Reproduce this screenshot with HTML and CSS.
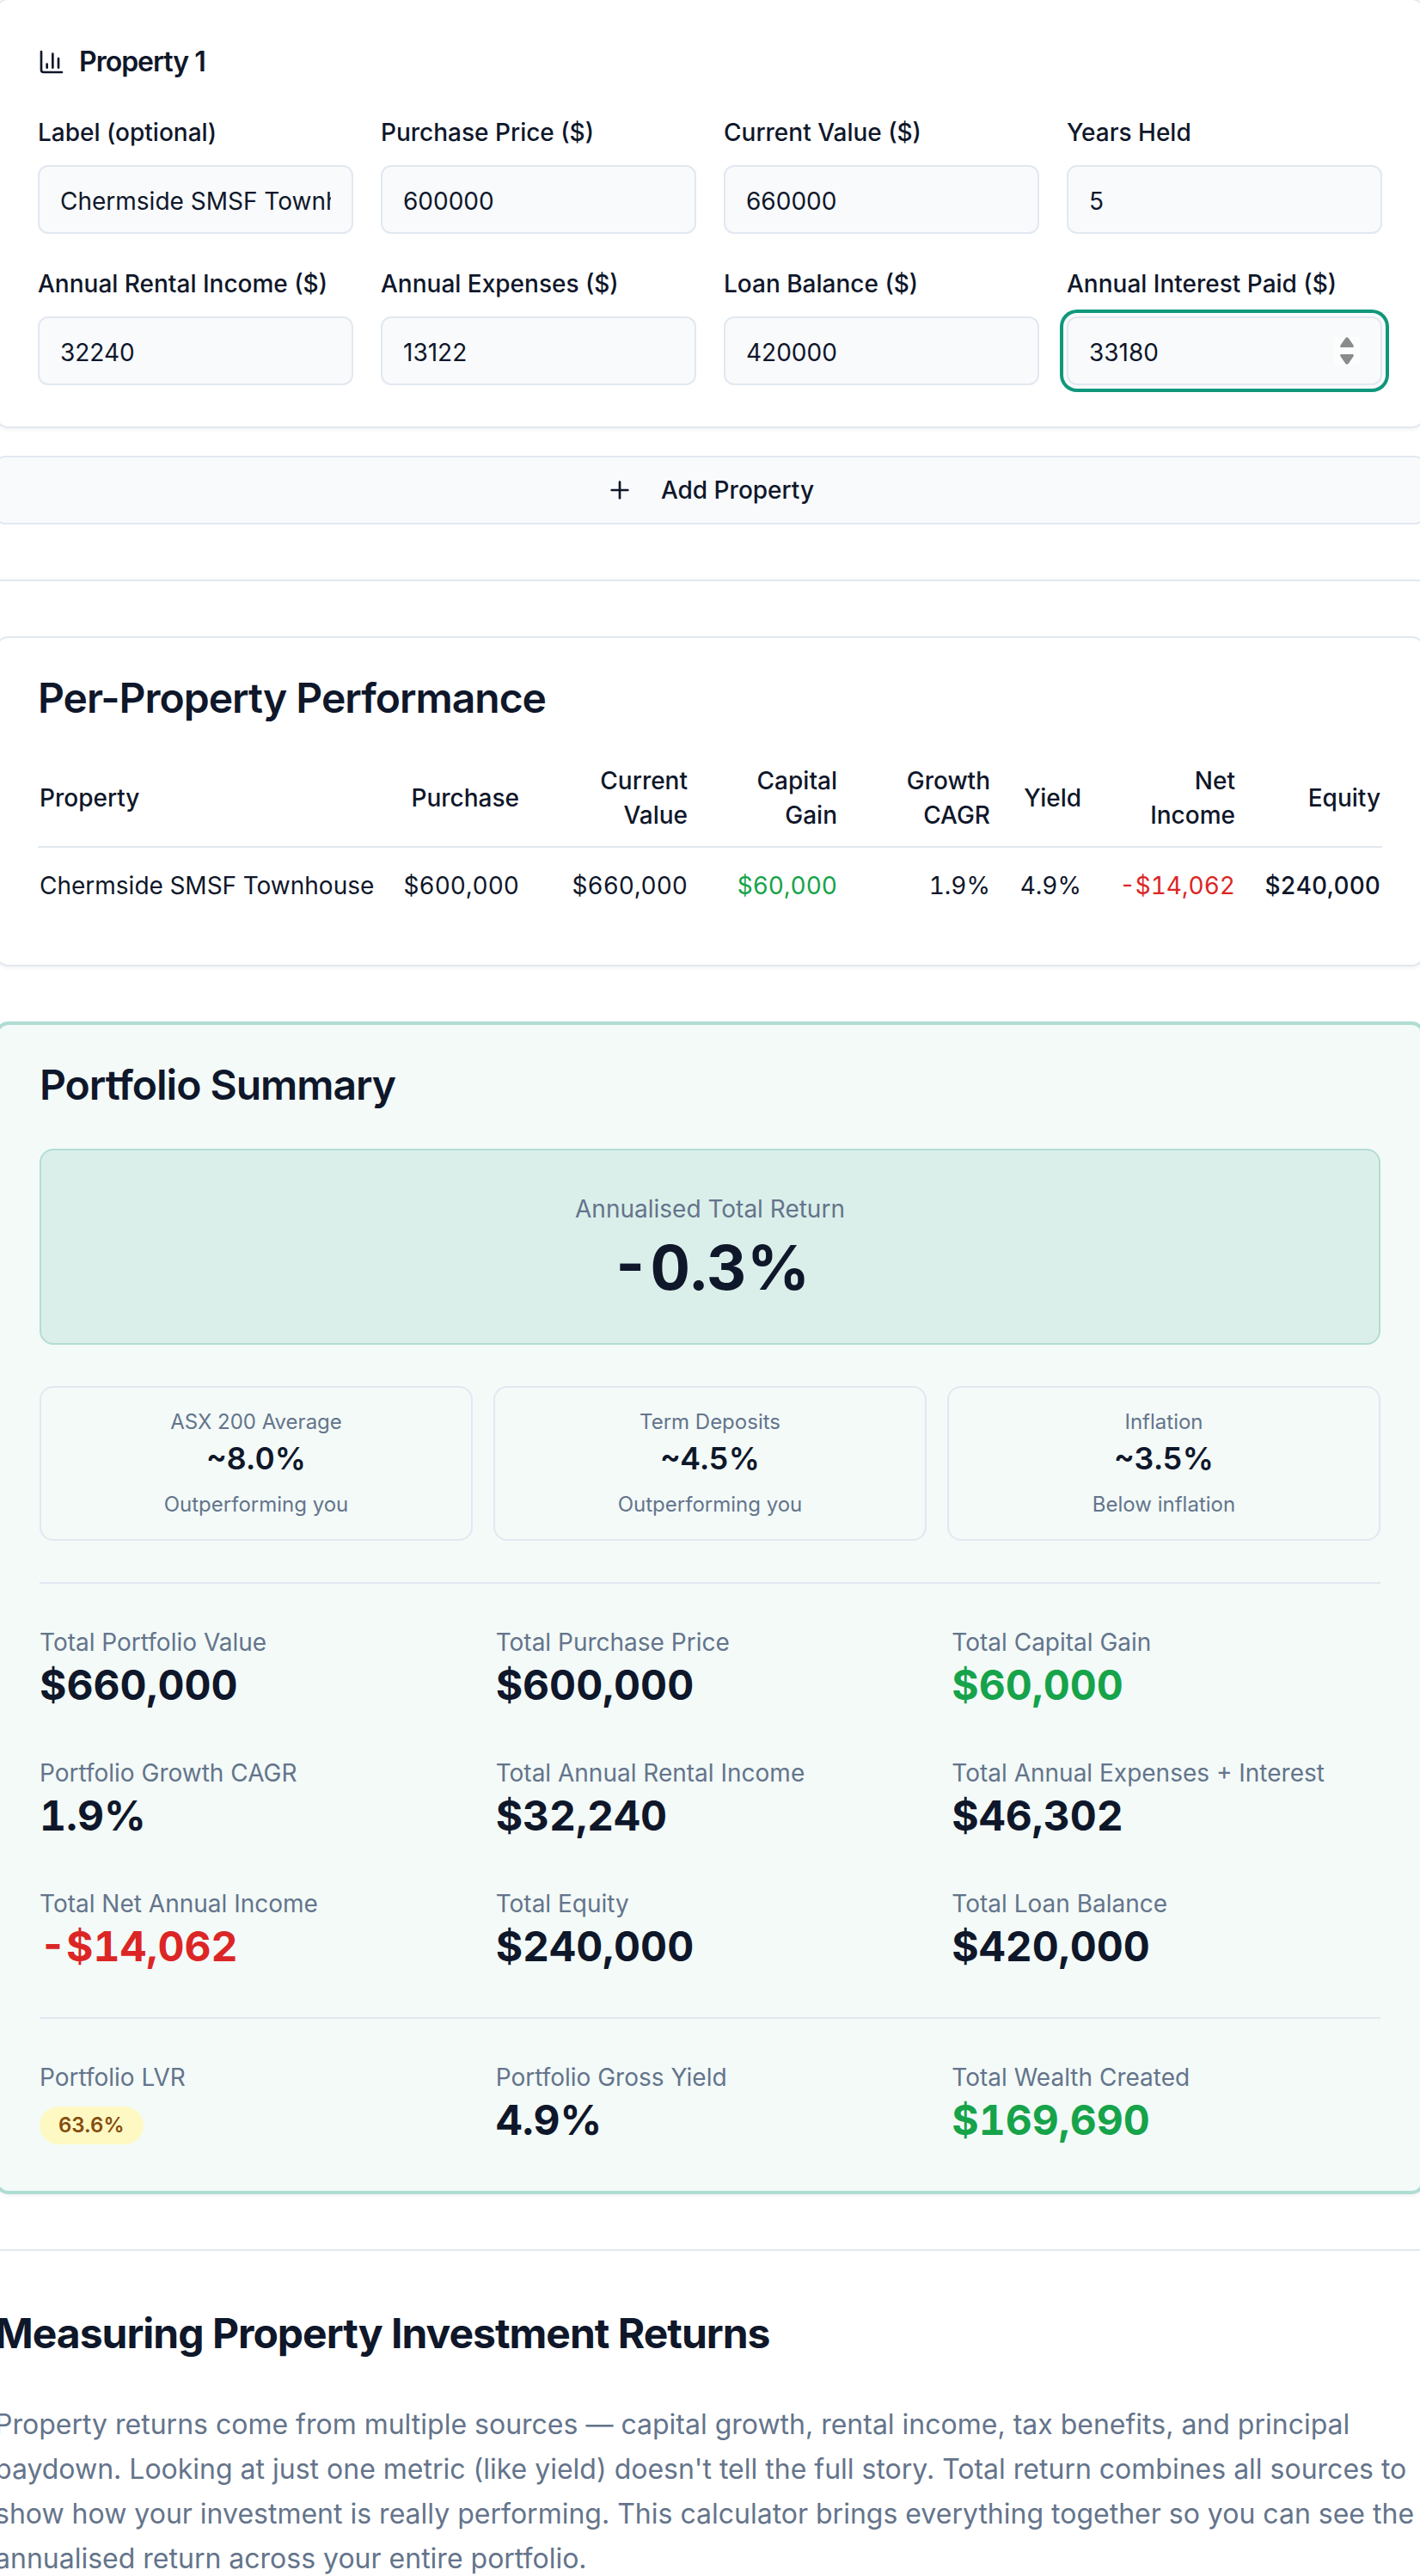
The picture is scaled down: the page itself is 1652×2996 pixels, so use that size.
FILE: index.html
```html
<!DOCTYPE html>
<html lang="en">
<head>
    <meta charset="UTF-8">
    <meta name="viewport" content="width=device-width, initial-scale=1.0">
    <title>Property Portfolio Calculator</title>
    <link rel="stylesheet" href="styles.css">
</head>
<body>
    <main class="calculator">
        <!-- Property inputs -->
        <section class="card property-card">
            <h3 class="property-title">
                <svg class="icon" viewBox="0 0 24 24" aria-hidden="true">
                    <path d="M3 3v16a2 2 0 0 0 2 2h16"/>
                    <path d="M18 17V9"/>
                    <path d="M13 17V5"/>
                    <path d="M8 17v-3"/>
                </svg>
                Property 1
            </h3>
            <div class="field-grid">
                <div class="field">
                    <label for="label">Label (optional)</label>
                    <input type="text" id="label" value="Chermside SMSF Townhouse">
                </div>
                <div class="field">
                    <label for="purchasePrice">Purchase Price ($)</label>
                    <input type="number" id="purchasePrice" value="600000">
                </div>
                <div class="field">
                    <label for="currentValue">Current Value ($)</label>
                    <input type="number" id="currentValue" value="660000">
                </div>
                <div class="field">
                    <label for="yearsHeld">Years Held</label>
                    <input type="number" id="yearsHeld" value="5">
                </div>
                <div class="field">
                    <label for="rentalIncome">Annual Rental Income ($)</label>
                    <input type="number" id="rentalIncome" value="32240">
                </div>
                <div class="field">
                    <label for="expenses">Annual Expenses ($)</label>
                    <input type="number" id="expenses" value="13122">
                </div>
                <div class="field">
                    <label for="loanBalance">Loan Balance ($)</label>
                    <input type="number" id="loanBalance" value="420000">
                </div>
                <div class="field">
                    <label for="interestPaid">Annual Interest Paid ($)</label>
                    <div class="stepper">
                        <input class="active" type="number" id="interestPaid" value="33180">
                        <svg class="stepper-arrows" viewBox="0 0 30 32" aria-hidden="true">
                            <path d="M13 1.5Q15 -1 17 1.5L22.5 9.5Q23.5 12 21.5 12H8.5Q6.5 12 7.5 9.5Z"/>
                            <path d="M13 30.5Q15 33 17 30.5L22.5 22.5Q23.5 20 21.5 20H8.5Q6.5 20 7.5 22.5Z"/>
                        </svg>
                    </div>
                </div>
            </div>
        </section>

        <button class="add-button" type="button">
            <svg class="icon" viewBox="0 0 24 24" aria-hidden="true">
                <path d="M5 12h14"/>
                <path d="M12 5v14"/>
            </svg>
            Add Property
        </button>

        <hr class="page-rule">

        <!-- Per-property results -->
        <section class="card">
            <h2 class="card-title table-title">Per-Property Performance</h2>
            <table class="performance">
                <colgroup>
                    <col class="col-property">
                    <col class="col-purchase">
                    <col class="col-value">
                    <col class="col-gain">
                    <col class="col-growth">
                    <col class="col-yield">
                    <col class="col-income">
                    <col class="col-equity">
                </colgroup>
                <thead>
                    <tr>
                        <th>Property</th>
                        <th>Purchase</th>
                        <th>Current<br>Value</th>
                        <th>Capital<br>Gain</th>
                        <th>Growth<br>CAGR</th>
                        <th>Yield</th>
                        <th>Net<br>Income</th>
                        <th>Equity</th>
                    </tr>
                </thead>
                <tbody>
                    <tr>
                        <td>Chermside SMSF Townhouse</td>
                        <td>$600,000</td>
                        <td>$660,000</td>
                        <td class="positive">$60,000</td>
                        <td>1.9%</td>
                        <td>4.9%</td>
                        <td class="negative">-$14,062</td>
                        <td class="equity">$240,000</td>
                    </tr>
                </tbody>
            </table>
        </section>

        <!-- Portfolio totals -->
        <section class="card summary">
            <h2 class="card-title">Portfolio Summary</h2>

            <div class="headline">
                <p class="headline-label">Annualised Total Return</p>
                <p class="headline-value">-0.3%</p>
            </div>

            <div class="benchmarks">
                <div class="benchmark">
                    <p class="benchmark-text">ASX 200 Average</p>
                    <p class="benchmark-value">~8.0%</p>
                    <p class="benchmark-text">Outperforming you</p>
                </div>
                <div class="benchmark">
                    <p class="benchmark-text">Term Deposits</p>
                    <p class="benchmark-value">~4.5%</p>
                    <p class="benchmark-text">Outperforming you</p>
                </div>
                <div class="benchmark">
                    <p class="benchmark-text">Inflation</p>
                    <p class="benchmark-value">~3.5%</p>
                    <p class="benchmark-text">Below inflation</p>
                </div>
            </div>

            <hr class="summary-rule">

            <div class="stats">
                <div>
                    <p class="stat-label">Total Portfolio Value</p>
                    <p class="stat-value">$660,000</p>
                </div>
                <div>
                    <p class="stat-label">Total Purchase Price</p>
                    <p class="stat-value">$600,000</p>
                </div>
                <div>
                    <p class="stat-label">Total Capital Gain</p>
                    <p class="stat-value positive">$60,000</p>
                </div>
                <div>
                    <p class="stat-label">Portfolio Growth CAGR</p>
                    <p class="stat-value">1.9%</p>
                </div>
                <div>
                    <p class="stat-label">Total Annual Rental Income</p>
                    <p class="stat-value">$32,240</p>
                </div>
                <div>
                    <p class="stat-label">Total Annual Expenses + Interest</p>
                    <p class="stat-value">$46,302</p>
                </div>
                <div>
                    <p class="stat-label">Total Net Annual Income</p>
                    <p class="stat-value negative">-$14,062</p>
                </div>
                <div>
                    <p class="stat-label">Total Equity</p>
                    <p class="stat-value">$240,000</p>
                </div>
                <div>
                    <p class="stat-label">Total Loan Balance</p>
                    <p class="stat-value">$420,000</p>
                </div>
            </div>

            <hr class="summary-rule">

            <div class="stats">
                <div>
                    <p class="stat-label">Portfolio LVR</p>
                    <span class="badge">63.6%</span>
                </div>
                <div>
                    <p class="stat-label">Portfolio Gross Yield</p>
                    <p class="stat-value">4.9%</p>
                </div>
                <div>
                    <p class="stat-label">Total Wealth Created</p>
                    <p class="stat-value positive">$169,690</p>
                </div>
            </div>
        </section>

        <hr class="page-rule">

        <section class="guide">
            <h2>Measuring Property Investment Returns</h2>
            <p>Property returns come from multiple sources — capital growth, rental income, tax benefits, and principal paydown. Looking at just one metric (like yield) doesn't tell the full story. Total return combines all sources to show how your investment is really performing. This calculator brings everything together so you can see the annualised return across your entire portfolio.</p>
        </section>
    </main>
</body>
</html>
```
FILE: styles.css
```css
* {
    box-sizing: border-box;
}
body {
    margin: 0;
    font-family: Inter, "Liberation Sans", sans-serif;
    font-size: 28px;
    line-height: 40px;
    color: #0f172a;
    background-color: #fff;
    overflow-x: hidden;
}
h2, h3, p {
    margin: 0;
}
h2, h3 {
    letter-spacing: -1px;
}
hr {
    height: 2px;
    border: none;
    background-color: #e2e8f0;
}
.calculator {
    margin: 0 -6px;
}
.icon {
    width: 32px;
    height: 32px;
    fill: none;
    stroke: currentColor;
    stroke-width: 2;
    stroke-linecap: round;
    stroke-linejoin: round;
}
.positive {
    color: #16a34a;
}
.negative {
    color: #dc2626;
}

/* Cards */
.card {
    padding: 48px;
    border: 2px solid #e2e8f0;
    border-radius: 16px;
    background-color: #fff;
    box-shadow: 0 2px 4px rgba(0, 0, 0, 0.05);
}
.card-title {
    margin-bottom: 52px;
    font-size: 48px;
    font-weight: 600;
    line-height: 44px;
}
.page-rule {
    margin: 64px 0;
}

/* Property form */
.property-card {
    margin-top: -2px;
    padding-top: 56px;
}
.property-title {
    display: flex;
    align-items: center;
    gap: 16px;
    margin-bottom: 40px;
    font-size: 32px;
    font-weight: 600;
    line-height: 32px;
}
.field-grid {
    display: grid;
    grid-template-columns: repeat(4, 1fr);
    gap: 32px;
}
.field label {
    display: block;
    margin-bottom: 12px;
    font-weight: 500;
    line-height: 52px;
    white-space: nowrap;
}
.field input {
    display: block;
    width: 100%;
    height: 80px;
    padding: 4px 24px 0;
    border: 2px solid #e2e8f0;
    border-radius: 12px;
    background-color: #f8fafc;
    color: inherit;
    font: inherit;
    appearance: textfield;
}
.field input::-webkit-inner-spin-button {
    display: none;
}
.field input:focus, .field input.active {
    outline: none;
    box-shadow: 0 0 0 4px #f8fafc, 0 0 0 8px #10977b;
}
.stepper {
    position: relative;
}
.stepper-arrows {
    position: absolute;
    top: 24px;
    right: 26px;
    width: 30px;
    height: 32px;
    background-color: #fcfdfd;
    fill: #8b8b8b;
}
.add-button {
    display: flex;
    align-items: center;
    justify-content: center;
    gap: 32px;
    width: 100%;
    height: 80px;
    margin-top: 32px;
    border: 2px solid #e2e8f0;
    border-radius: 12px;
    background-color: #f8fafc;
    color: inherit;
    font: inherit;
    font-weight: 500;
    cursor: pointer;
}

/* Performance table */
.table-title {
    margin-bottom: 38px;
}
.performance {
    width: 100%;
    border-collapse: separate;
    border-spacing: 0;
    font-variant-numeric: tabular-nums;
}
.performance th, .performance td {
    padding: 16px;
    text-align: right;
    white-space: nowrap;
}
.performance th {
    border-bottom: 2px solid #e2e8f0;
    font-weight: 500;
}
.performance td {
    padding-top: 24px;
    padding-bottom: 24px;
}
.performance th:first-child, .performance td:first-child {
    padding-left: 2px;
    text-align: left;
}
.performance th:last-child, .performance td:last-child {
    padding-right: 2px;
}
.performance .equity {
    font-weight: 500;
}
.col-property {
    width: 408px;
}
.col-purchase {
    width: 168px;
}
.col-value {
    width: 196px;
}
.col-gain {
    width: 174px;
}
.col-growth {
    width: 178px;
}
.col-yield {
    width: 106px;
}
.col-income {
    width: 179px;
}
.col-equity {
    width: 155px;
}

/* Portfolio summary */
.summary {
    margin-top: 64px;
    border: 4px solid #afdcd2;
    background-color: #f3faf8;
}
.headline {
    padding: 48px;
    border: 2px solid #b2ddd3;
    border-radius: 16px;
    background-color: #dbefea;
    text-align: center;
}
.headline-label {
    color: #64748b;
}
.headline-value {
    margin-top: 8px;
    font-size: 72px;
    font-weight: 700;
    line-height: 80px;
    font-variant-numeric: tabular-nums;
}
.benchmarks {
    display: grid;
    grid-template-columns: repeat(3, 1fr);
    gap: 24px;
    margin-top: 48px;
}
.benchmark {
    padding: 24px;
    border: 2px solid #e2e8f0;
    border-radius: 16px;
    text-align: center;
}
.benchmark-text {
    font-size: 24px;
    line-height: 32px;
    color: #64748b;
}
.benchmark-value {
    margin-bottom: 12px;
    font-size: 36px;
    font-weight: 600;
    line-height: 52px;
    font-variant-numeric: tabular-nums;
}
.summary-rule {
    margin: 48px 0;
}
.stats {
    display: grid;
    grid-template-columns: repeat(3, 1fr);
    gap: 48px 32px;
}
.stat-label {
    color: #64748b;
}
.stat-value {
    margin-bottom: 4px;
    font-size: 48px;
    font-weight: 700;
    line-height: 60px;
    font-variant-numeric: tabular-nums;
}
.badge {
    display: block;
    width: fit-content;
    margin-top: 14px;
    padding: 6px 22px;
    border-radius: 22px;
    background-color: #fef9c3;
    color: #854d0e;
    font-size: 24px;
    font-weight: 600;
    line-height: 32px;
}

/* Guide text */
.guide h2 {
    margin-bottom: 48px;
    font-size: 48px;
    font-weight: 700;
    line-height: 64px;
}
.guide p {
    font-size: 32px;
    line-height: 52px;
    color: #64748b;
}
```
